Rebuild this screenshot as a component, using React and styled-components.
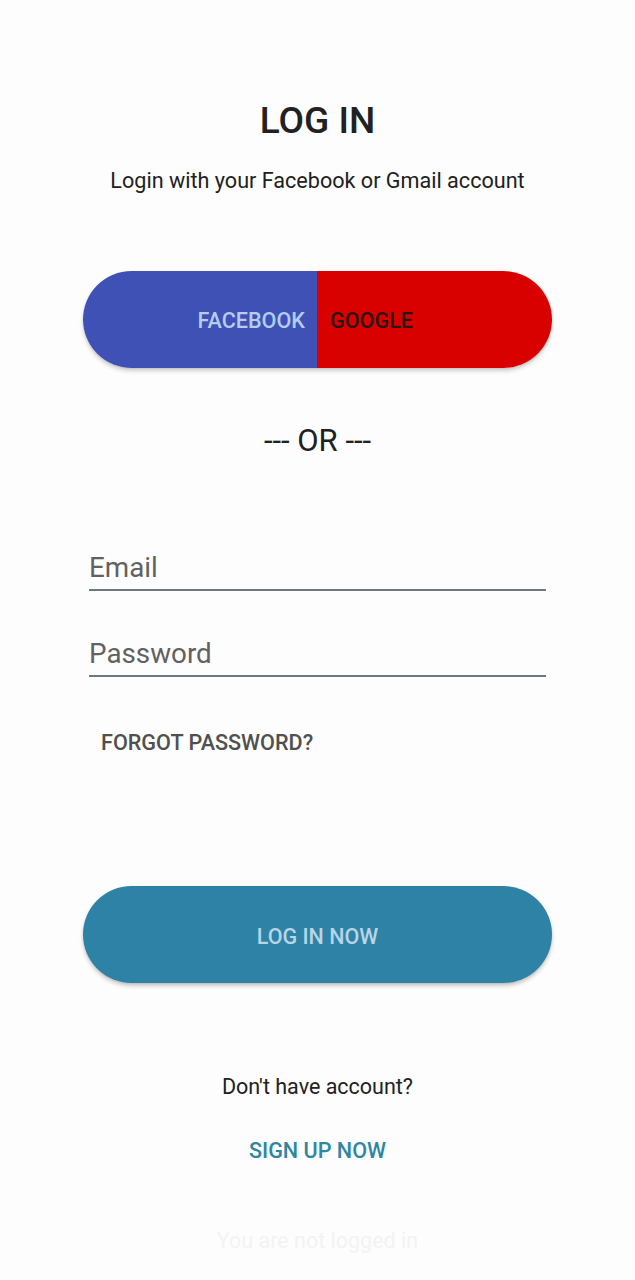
import styled, {createGlobalStyle} from "styled-components";

const GlobalStyle = createGlobalStyle`
    html, body {
        margin: 0;
        padding: 0;
        background: #fdfdfd;
    }

    body {
        font-family: Roboto, "Noto Sans", Arial, sans-serif;
    }
`;

const Screen = styled.div`
    width: 635px;
    min-height: 1280px;
    box-sizing: border-box;
    padding: 101px 83px 0 83px;
    display: flex;
    flex-direction: column;
    align-items: stretch;
    background: #fdfdfd;
`;

const Title = styled.h1`
    margin: 0;
    font-size: 37px;
    line-height: 40px;
    font-weight: 500;
    color: #212121;
    text-align: center;
`;

const Subtitle = styled.p`
    margin: 28px 0 0;
    font-size: 21.6px;
    line-height: 24px;
    color: #212121;
    text-align: center;
`;

const SocialPill = styled.div`
    margin-top: 78px;
    height: 97px;
    border-radius: 49px;
    overflow: hidden;
    display: grid;
    grid-template-columns: 234px 1fr;
    box-shadow: 0 3px 4px rgba(0, 0, 0, 0.18), 0 1px 2px rgba(0, 0, 0, 0.08);
`;

const SocialButton = styled.button`
    border: 0;
    margin: 0;
    font-family: inherit;
    font-size: 21.6px;
    font-weight: 500;
    display: flex;
    align-items: center;
    background: ${p => p.$bg};
    color: ${p => p.$fg};
    justify-content: ${p => (p.$side === "left" ? "flex-end" : "flex-start")};
    padding: ${p => (p.$side === "left" ? "2px 12px 0 0" : "2px 0 0 13px")};
`;

const Divider = styled.div`
    margin-top: 57px;
    font-size: 31px;
    line-height: 32px;
    color: #212121;
    text-align: center;
`;

const Field = styled.input`
    display: block;
    margin: ${p => p.$top}px 6px 0;
    padding: 0 0 5px;
    height: 32px;
    box-sizing: content-box;
    border: 0;
    border-bottom: 2px solid #6e7880;
    background: transparent;
    font-family: inherit;
    font-size: 27.8px;
    line-height: 32px;
    color: #212121;
    outline: none;

    &::placeholder {
        color: #616161;
    }
`;

const TextLink = styled.button`
    border: 0;
    background: none;
    padding: 0;
    font-family: inherit;
    font-size: 21.6px;
    line-height: 24px;
    font-weight: 500;
    color: ${p => p.$color};
    margin-top: ${p => p.$top}px;
    align-self: ${p => p.$align || "center"};
    margin-left: ${p => p.$left || 0}px;
`;

const PrimaryButton = styled.button`
    margin-top: 131px;
    height: 97px;
    padding: 4px 0 0;
    border: 0;
    border-radius: 49px;
    background: #2e82a5;
    color: #b7d5e6;
    font-family: inherit;
    font-size: 21.5px;
    font-weight: 500;
    box-shadow: 0 3px 4px rgba(0, 0, 0, 0.2), 0 1px 2px rgba(0, 0, 0, 0.08);
`;

const Note = styled.p`
    margin: ${p => p.$top}px 0 0;
    font-size: 21.5px;
    line-height: 24px;
    color: ${p => p.$color};
    text-align: center;
`;

export default function App() {
    return (
        <>
            <GlobalStyle/>
            <Screen>
                <Title>LOG IN</Title>
                <Subtitle>Login with your Facebook or Gmail account</Subtitle>

                <SocialPill>
                    <SocialButton $side="left" $bg="#3f51b5" $fg="#b3cdee">FACEBOOK</SocialButton>
                    <SocialButton $side="right" $bg="#d90000" $fg="#2b1414">GOOGLE</SocialButton>
                </SocialPill>

                <Divider>--- OR ---</Divider>

                <Field $top={95} type="email" placeholder="Email"/>
                <Field $top={47} type="password" placeholder="Password"/>

                <TextLink $top={54} $align="flex-start" $left={18} $color="#505050">
                    FORGOT PASSWORD?
                </TextLink>

                <PrimaryButton>LOG IN NOW</PrimaryButton>

                <Note $top={92} $color="#212121">Don't have account?</Note>
                <TextLink $top={40} $color="#2e86a3">SIGN UP NOW</TextLink>
                <Note $top={66} $color="#f3f3f3">You are not logged in</Note>
            </Screen>
        </>
    );
}
